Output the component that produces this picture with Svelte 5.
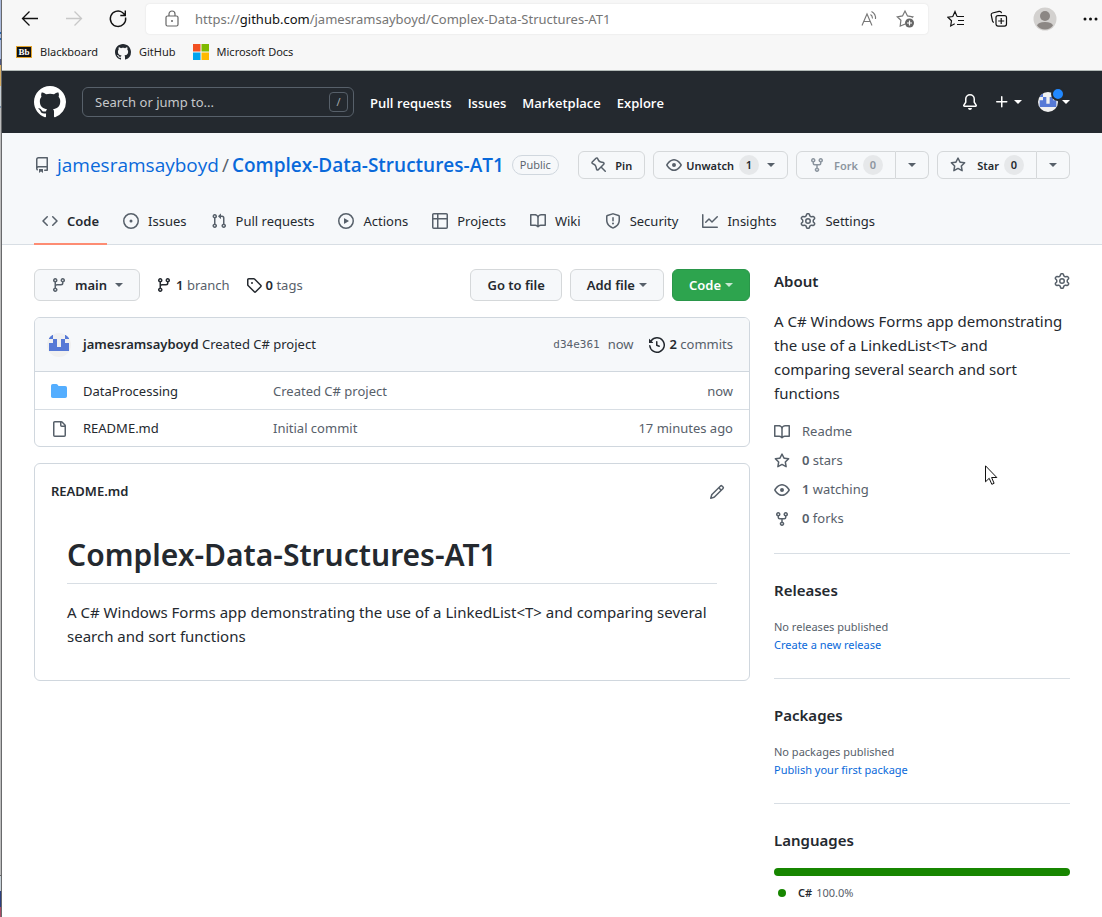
<script>
  const icons = {
    mark: 'M8 0C3.58 0 0 3.58 0 8c0 3.54 2.29 6.53 5.47 7.59.4.07.55-.17.55-.38 0-.19-.01-.82-.01-1.49-2.01.37-2.53-.49-2.69-.94-.09-.23-.48-.94-.82-1.13-.28-.15-.68-.52-.01-.53.63-.01 1.08.58 1.23.82.72 1.21 1.87.87 2.33.66.07-.52.28-.87.51-1.07-1.78-.2-3.64-.89-3.64-3.95 0-.87.31-1.59.82-2.15-.08-.2-.36-1.02.08-2.12 0 0 .67-.21 2.2.82.64-.18 1.32-.27 2-.27.68 0 1.36.09 2 .27 1.53-1.04 2.2-.82 2.2-.82.44 1.1.16 1.92.08 2.12.51.56.82 1.27.82 2.15 0 3.07-1.87 3.75-3.65 3.95.29.25.54.73.54 1.48 0 1.07-.01 1.93-.01 2.2 0 .21.15.46.55.38A8.013 8.013 0 0016 8c0-4.42-3.58-8-8-8z',
    repo: 'M2 2.5A2.5 2.5 0 014.5 0h8.75a.75.75 0 01.75.75v12.5a.75.75 0 01-.75.75h-2.5a.75.75 0 110-1.5h1.75v-2h-8a1 1 0 00-.714 1.7.75.75 0 01-1.072 1.05A2.495 2.495 0 012 11.5v-9zm10.5-1V9h-8c-.356 0-.694.074-1 .208V2.5a1 1 0 011-1h8zM5 12.25v3.25a.25.25 0 00.4.2l1.45-1.087a.25.25 0 01.3 0L8.6 15.7a.25.25 0 00.4-.2v-3.25a.25.25 0 00-.25-.25h-3.5a.25.25 0 00-.25.25z',
    pin: 'M4.456.734a1.75 1.75 0 012.826.504l.613 1.327a3.081 3.081 0 002.084 1.707l2.454.584c1.332.317 1.8 1.972.832 2.94L11.06 10l3.72 3.72a.75.75 0 11-1.061 1.06L10 11.06l-2.204 2.205c-.968.968-2.623.5-2.94-.832l-.584-2.454a3.081 3.081 0 00-1.707-2.084l-1.327-.613a1.75 1.75 0 01-.504-2.826L4.456.734zM5.92 1.866a.25.25 0 00-.404-.072L1.794 5.516a.25.25 0 00.072.404l1.328.613A4.582 4.582 0 015.73 9.63l.584 2.454a.25.25 0 00.42.12l5.47-5.47a.25.25 0 00-.12-.42L9.63 5.73a4.581 4.581 0 01-3.098-2.537L5.92 1.866z',
    eye: 'M1.679 7.932c.412-.621 1.242-1.75 2.366-2.717C5.175 4.242 6.527 3.5 8 3.5c1.473 0 2.824.742 3.955 1.715 1.124.967 1.954 2.096 2.366 2.717a.119.119 0 010 .136c-.412.621-1.242 1.75-2.366 2.717C10.825 11.758 9.473 12.5 8 12.5c-1.473 0-2.824-.742-3.955-1.715C2.92 9.818 2.09 8.69 1.679 8.068a.119.119 0 010-.136zM8 2c-1.981 0-3.67.992-4.933 2.078C1.797 5.169.88 6.423.43 7.1a1.619 1.619 0 000 1.798c.45.678 1.367 1.932 2.637 3.024C4.329 13.008 6.019 14 8 14c1.981 0 3.67-.992 4.933-2.078 1.27-1.091 2.187-2.345 2.637-3.023a1.619 1.619 0 000-1.798c-.45-.678-1.367-1.932-2.637-3.023C11.671 2.992 9.981 2 8 2zm0 8a2 2 0 100-4 2 2 0 000 4z',
    fork: 'M5 3.25a.75.75 0 11-1.5 0 .75.75 0 011.5 0zm0 2.122a2.25 2.25 0 10-1.5 0v.878A2.25 2.25 0 005.75 8.5h1.5v2.128a2.251 2.251 0 101.5 0V8.5h1.5a2.25 2.25 0 002.25-2.25v-.878a2.25 2.25 0 10-1.5 0v.878a.75.75 0 01-.75.75h-4.5A.75.75 0 015 6.25v-.878zm3.75 7.378a.75.75 0 11-1.5 0 .75.75 0 011.5 0zm3-8.75a.75.75 0 100-1.5.75.75 0 000 1.5z',
    star: 'M8 .25a.75.75 0 01.673.418l1.882 3.815 4.21.612a.75.75 0 01.416 1.279l-3.046 2.97.719 4.192a.75.75 0 01-1.088.791L8 12.347l-3.766 1.98a.75.75 0 01-1.088-.79l.72-4.194L.818 6.374a.75.75 0 01.416-1.28l4.21-.611L7.327.668A.75.75 0 018 .25zm0 2.445L6.615 5.5a.75.75 0 01-.564.41l-3.097.45 2.24 2.184a.75.75 0 01.216.664l-.528 3.084 2.769-1.456a.75.75 0 01.698 0l2.77 1.456-.53-3.084a.75.75 0 01.216-.664l2.24-2.183-3.096-.45a.75.75 0 01-.564-.41L8 2.694v.001z',
    code: 'M4.72 3.22a.75.75 0 011.06 1.06L2.06 8l3.72 3.72a.75.75 0 11-1.06 1.06L.47 8.53a.75.75 0 010-1.06l4.25-4.25zm6.56 0a.75.75 0 10-1.06 1.06L13.94 8l-3.72 3.72a.75.75 0 101.06 1.06l4.25-4.25a.75.75 0 000-1.06l-4.25-4.25z',
    issue: 'M8 9.5a1.5 1.5 0 100-3 1.5 1.5 0 000 3zM8 0a8 8 0 100 16A8 8 0 008 0zM1.5 8a6.5 6.5 0 1113 0 6.5 6.5 0 01-13 0z',
    pull: 'M7.177 3.073L9.573.677A.25.25 0 0110 .854v4.792a.25.25 0 01-.427.177L7.177 3.427a.25.25 0 010-.354zM3.75 2.5a.75.75 0 100 1.5.75.75 0 000-1.5zm-2.25.75a2.25 2.25 0 113 2.122v5.256a2.251 2.251 0 11-1.5 0V5.372A2.25 2.25 0 011.5 3.25zM11 2.5h-1V4h1a1 1 0 011 1v5.628a2.251 2.251 0 101.5 0V5A2.5 2.5 0 0011 2.5zm1 10.25a.75.75 0 111.5 0 .75.75 0 01-1.5 0zM3.75 12a.75.75 0 100 1.5.75.75 0 000-1.5z',
    play: 'M1.5 8a6.5 6.5 0 1113 0 6.5 6.5 0 01-13 0zM8 0a8 8 0 100 16A8 8 0 008 0zM6.379 5.227A.25.25 0 006 5.442v5.117a.25.25 0 00.379.214l4.264-2.559a.25.25 0 000-.428L6.379 5.227z',
    table: 'M0 1.75C0 .784.784 0 1.75 0h12.5C15.216 0 16 .784 16 1.75v12.5A1.75 1.75 0 0114.25 16H1.75A1.75 1.75 0 010 14.25V1.75zM1.5 6.5v7.75c0 .138.112.25.25.25H5v-8H1.5zM5 5H1.5V1.75a.25.25 0 01.25-.25H5V5zm1.5 1.5v8h7.75a.25.25 0 00.25-.25V6.5h-8zm8-1.5h-8V1.5h7.75a.25.25 0 01.25.25V5z',
    book: 'M0 1.75A.75.75 0 01.75 1h4.253c1.227 0 2.317.59 3 1.501A3.744 3.744 0 0111.006 1h4.245a.75.75 0 01.75.75v10.5a.75.75 0 01-.75.75h-4.507a2.25 2.25 0 00-1.591.659l-.622.621a.75.75 0 01-1.06 0l-.622-.621A2.25 2.25 0 005.258 13H.75a.75.75 0 01-.75-.75V1.75zm8.755 3a2.25 2.25 0 012.25-2.25H14.5v9h-3.757c-.71 0-1.4.201-1.992.572l.004-7.322zm-1.504 7.324l.004-5.073-.002-2.253A2.25 2.25 0 005.003 2.5H1.5v9h3.757a3.75 3.75 0 011.994.574z',
    shield: 'M7.467.133a1.75 1.75 0 011.066 0l5.25 1.68A1.75 1.75 0 0115 3.48V7c0 1.566-.32 3.182-1.303 4.682-.983 1.498-2.585 2.813-5.032 3.855a1.7 1.7 0 01-1.33 0c-2.447-1.042-4.049-2.357-5.032-3.855C1.32 10.182 1 8.566 1 7V3.48a1.75 1.75 0 011.217-1.667l5.25-1.68zm.61 1.429a.25.25 0 00-.153 0l-5.25 1.68a.25.25 0 00-.174.238V7c0 1.358.275 2.666 1.057 3.86.784 1.194 2.121 2.34 4.366 3.297a.2.2 0 00.154 0c2.245-.956 3.582-2.104 4.366-3.298C13.225 9.666 13.5 8.36 13.5 7V3.48a.25.25 0 00-.174-.237l-5.25-1.68zM9 10.5a1 1 0 11-2 0 1 1 0 012 0zm-.25-5.75a.75.75 0 10-1.5 0v3a.75.75 0 001.5 0v-3z',
    graph: 'M1.5 1.75a.75.75 0 00-1.5 0v12.5c0 .414.336.75.75.75h14.5a.75.75 0 000-1.5H1.5V1.75zm14.28 2.53a.75.75 0 00-1.06-1.06L10 7.94 7.53 5.47a.75.75 0 00-1.06 0L3.22 8.72a.75.75 0 001.06 1.06L7 7.06l2.47 2.47a.75.75 0 001.06 0l5.25-5.25z',
    gear: 'M7.429 1.525a6.593 6.593 0 011.142 0c.036.003.108.036.137.146l.289 1.105c.147.56.55.967.997 1.189.174.086.341.183.501.29.417.278.97.423 1.53.27l1.102-.303c.11-.03.175.016.195.046.219.31.41.641.573.989.014.031.022.11-.059.19l-.815.806c-.411.406-.562.957-.53 1.456a4.588 4.588 0 010 .582c-.032.499.119 1.05.53 1.456l.815.806c.08.08.073.159.059.19a6.494 6.494 0 01-.573.99c-.02.029-.086.074-.195.045l-1.103-.303c-.559-.153-1.112-.008-1.529.27-.16.107-.327.204-.5.29-.449.222-.851.628-.998 1.189l-.289 1.105c-.029.11-.101.143-.137.146a6.613 6.613 0 01-1.142 0c-.036-.003-.108-.037-.137-.146l-.289-1.105c-.147-.56-.55-.967-.997-1.189a4.502 4.502 0 01-.501-.29c-.417-.278-.97-.423-1.53-.27l-1.102.303c-.11.03-.175-.016-.195-.046a6.492 6.492 0 01-.573-.989c-.014-.031-.022-.11.059-.19l.815-.806c.411-.406.562-.957.53-1.456a4.587 4.587 0 010-.582c.032-.499-.119-1.05-.53-1.456l-.815-.806c-.08-.08-.073-.159-.059-.19a6.44 6.44 0 01.573-.99c.02-.029.086-.075.195-.045l1.103.303c.559.153 1.112.008 1.529-.27.16-.107.327-.204.5-.29.449-.222.851-.628.998-1.189l.289-1.105c.029-.11.101-.143.137-.146zM8 0c-.236 0-.47.01-.701.03-.743.065-1.29.615-1.458 1.261l-.29 1.106c-.017.066-.078.158-.211.224a5.994 5.994 0 00-.668.386c-.123.082-.233.09-.3.071L3.27 2.776c-.644-.177-1.392.02-1.82.63a7.977 7.977 0 00-.704 1.217c-.315.675-.111 1.422.363 1.891l.815.806c.05.048.098.147.088.294a6.084 6.084 0 000 .772c.01.147-.038.246-.088.294l-.815.806c-.474.469-.678 1.216-.363 1.891.2.428.436.835.704 1.218.428.609 1.176.806 1.82.63l1.103-.303c.066-.019.176-.011.299.071.213.143.436.272.668.386.133.066.194.158.212.224l.289 1.106c.169.646.715 1.196 1.458 1.26a8.094 8.094 0 001.402 0c.743-.064 1.29-.614 1.458-1.26l.29-1.106c.017-.066.078-.158.211-.224a5.98 5.98 0 00.668-.386c.123-.082.233-.09.3-.071l1.102.302c.644.177 1.392-.02 1.82-.63.268-.382.505-.789.704-1.217.315-.675.111-1.422-.364-1.891l-.814-.806c-.05-.048-.098-.147-.088-.294a6.1 6.1 0 000-.772c-.01-.147.039-.246.088-.294l.814-.806c.475-.469.679-1.216.364-1.891a7.992 7.992 0 00-.704-1.218c-.428-.609-1.176-.806-1.82-.63l-1.103.303c-.066.019-.176.011-.299-.071a5.991 5.991 0 00-.668-.386c-.133-.066-.194-.158-.212-.224L10.16 1.29C9.99.645 9.444.095 8.701.031A8.094 8.094 0 008 0zm1.5 8a1.5 1.5 0 11-3 0 1.5 1.5 0 013 0zM11 8a3 3 0 11-6 0 3 3 0 016 0z',
    branch: 'M11.75 2.5a.75.75 0 100 1.5.75.75 0 000-1.5zm-2.25.75a2.25 2.25 0 113 2.122V6A2.5 2.5 0 0110 8.5H6a1 1 0 00-1 1v1.128a2.251 2.251 0 11-1.5 0V5.372a2.25 2.25 0 111.5 0v1.836A2.492 2.492 0 016 7h4a1 1 0 001-1v-.628A2.25 2.25 0 019.5 3.25zM4.25 12a.75.75 0 100 1.5.75.75 0 000-1.5zM3.5 3.25a.75.75 0 111.5 0 .75.75 0 01-1.5 0z',
    tag: 'M2.5 7.775V2.75a.25.25 0 01.25-.25h5.025a.25.25 0 01.177.073l6.25 6.25a.25.25 0 010 .354l-5.025 5.025a.25.25 0 01-.354 0l-6.25-6.25a.25.25 0 01-.073-.177zm-1.5 0V2.75C1 1.784 1.784 1 2.75 1h5.025c.464 0 .91.184 1.238.513l6.25 6.25a1.75 1.75 0 010 2.474l-5.026 5.026a1.75 1.75 0 01-2.474 0l-6.25-6.25A1.75 1.75 0 011 7.775zM6 5a1 1 0 100 2 1 1 0 000-2z',
    history: 'M1.643 3.143L.427 1.927A.25.25 0 000 2.104V5.75c0 .138.112.25.25.25h3.646a.25.25 0 00.177-.427L2.715 4.215a6.5 6.5 0 11-1.18 4.458.75.75 0 10-1.493.154 8.001 8.001 0 101.6-5.684zM7.75 4a.75.75 0 01.75.75v2.992l2.028.812a.75.75 0 01-.557 1.392l-2.5-1A.75.75 0 017 8.25v-3.5A.75.75 0 017.75 4z',
    folder: 'M1.75 1A1.75 1.75 0 000 2.75v10.5C0 14.216.784 15 1.75 15h12.5A1.75 1.75 0 0016 13.25v-8.5A1.75 1.75 0 0014.25 3h-6.5a.25.25 0 01-.2-.1l-.9-1.2c-.33-.44-.85-.7-1.4-.7h-3.5z',
    file: 'M2 1.75C2 .784 2.784 0 3.75 0h6.586c.464 0 .909.184 1.237.513l2.914 2.914c.329.328.513.773.513 1.237v9.586A1.75 1.75 0 0113.25 16h-9.5A1.75 1.75 0 012 14.25V1.75zm1.75-.25a.25.25 0 00-.25.25v12.5c0 .138.112.25.25.25h9.5a.25.25 0 00.25-.25V6h-2.75A1.75 1.75 0 019 4.25V1.5H3.75zm6.75.062V4.25c0 .138.112.25.25.25h2.688a.252.252 0 00-.011-.013l-2.914-2.914a.272.272 0 00-.013-.011z',
    pencil: 'M11.013 1.427a1.75 1.75 0 012.474 0l1.086 1.086a1.75 1.75 0 010 2.474l-8.61 8.61c-.21.21-.47.364-.756.445l-3.251.93a.75.75 0 01-.927-.928l.929-3.25a1.75 1.75 0 01.445-.758l8.61-8.61zm1.414 1.06a.25.25 0 00-.354 0L10.811 3.75l1.439 1.44 1.263-1.263a.25.25 0 000-.354l-1.086-1.086zM11.189 6.25L9.75 4.81l-6.286 6.287a.25.25 0 00-.064.108l-.558 1.953 1.953-.558a.249.249 0 00.108-.064l6.286-6.286z',
    bell: 'M8 16a2 2 0 001.985-1.75c.017-.137-.097-.25-.235-.25h-3.5c-.138 0-.252.113-.235.25A2 2 0 008 16zM8 1.5A3.5 3.5 0 004.5 5v2.947c0 .346-.102.683-.294.97l-1.703 2.556a.018.018 0 00-.003.01l.001.006c0 .002.002.004.004.006a.017.017 0 00.006.004l.007.001h10.964l.007-.001a.016.016 0 00.006-.004.016.016 0 00.004-.006l.001-.007a.017.017 0 00-.003-.01l-1.703-2.554a1.75 1.75 0 01-.294-.97V5A3.5 3.5 0 008 1.5zM3 5a5 5 0 0110 0v2.947c0 .05.015.098.042.139l1.703 2.555A1.518 1.518 0 0113.482 13H2.518a1.518 1.518 0 01-1.263-2.36l1.703-2.554A.25.25 0 003 7.947V5z',
    plus: 'M7.75 2a.75.75 0 01.75.75V7h4.25a.75.75 0 110 1.5H8.5v4.25a.75.75 0 11-1.5 0V8.5H2.75a.75.75 0 010-1.5H7V2.75A.75.75 0 017.75 2z'
  };

  const tabs = [
    ['code', 'Code'], ['issue', 'Issues'], ['pull', 'Pull requests'],
    ['play', 'Actions'], ['table', 'Projects'], ['book', 'Wiki'],
    ['shield', 'Security'], ['graph', 'Insights'], ['gear', 'Settings']
  ];

  const files = [
    { icon: 'folder', name: 'DataProcessing', message: 'Created C# project', age: 'now' },
    { icon: 'file', name: 'README.md', message: 'Initial commit', age: '17 minutes ago' }
  ];

  const facts = [
    { icon: 'book', count: '', label: 'Readme' },
    { icon: 'star', count: '0', label: 'stars' },
    { icon: 'eye', count: '1', label: 'watching' },
    { icon: 'fork', count: '0', label: 'forks' }
  ];

  const description = 'A C# Windows Forms app demonstrating the use of a LinkedList<T> and comparing several search and sort functions';
</script>

{#snippet icon(name, size = 16)}
  <svg class="icon icon-{name}" width={size} height={size} viewBox="0 0 16 16" fill="currentColor" aria-hidden="true">
    <path fill-rule="evenodd" d={icons[name]} />
  </svg>
{/snippet}

{#snippet identicon(size)}
  <svg class="identicon" width={size} height={size} viewBox="0 0 24 24" aria-hidden="true">
    <rect width="24" height="24" fill="#f0f0f0" />
    <path fill="#5679d6" d="M2 2h4v4H2zM18 2h4v4h-4zM6 6h4v8h4V6h4v4h4v8H2v-8h4z" />
  </svg>
{/snippet}

<div class="window">
  <div class="chrome">
    <div class="toolbar">
      <button class="tool" aria-label="Back">
        <svg width="20" height="20" viewBox="0 0 20 20" fill="none" stroke="#111" stroke-width="1.3"><path d="M18 9.5H3M9.5 2.5l-7 7 7 7" /></svg>
      </button>
      <button class="tool" aria-label="Forward" disabled>
        <svg width="20" height="20" viewBox="0 0 20 20" fill="none" stroke="#c8c8c8" stroke-width="1.3"><path d="M2 9.5h15M10.500 2.500l7 7-7 7" /></svg>
      </button>
      <button class="tool" aria-label="Refresh">
        <svg width="20" height="20" viewBox="0 0 20 20" fill="none" stroke="#111" stroke-width="1.4"><path d="M17.600 8.500A7.700 7.700 0 1 1 14.500 3.500L17 6M17.300 1.500v5h-5" /></svg>
      </button>
      <div class="address">
        <svg width="14" height="18" viewBox="0 0 14 18" fill="none" stroke="#666" stroke-width="1.2"><rect x="1" y="6" width="12" height="10" rx="1.500" /><path d="M4 6V4a3 3 0 0 1 6 0v2" /><circle cx="7" cy="11" r="1" fill="#666" stroke="none" /></svg>
        <div class="url"><span>https://</span>github.com<span>/jamesramsayboyd/Complex-Data-Structures-AT1</span></div>
        <button class="tool" aria-label="Read aloud">
          <svg width="18" height="18" viewBox="0 0 18 18" fill="none" stroke="#777" stroke-width="1.1"><path d="M2 15.500L7 4l5 11.500M4 11.500h6.200M10.500 4.500q2 1.300 2 4M11.500 1.500q4.500 2.500 4 7.500" /></svg>
        </button>
        <button class="tool" aria-label="Add to favorites">
          <svg width="20" height="20" viewBox="0 0 20 20"><path d="M9.300 15L4.200 17l.7-5.800L1.300 7.800l5.200-.9L9 2l2.500 4.900 5.300.9-1 1" fill="none" stroke="#777" stroke-width="1.200" /><circle cx="13.500" cy="14" r="4.500" fill="#666" /><path d="M13.500 11.500v5M11 14h5" stroke="#fff" stroke-width="1.200" /></svg>
        </button>
      </div>
      <div class="tools">
        <button class="tool" aria-label="Favorites">
          <svg width="18" height="18" viewBox="0 0 18 18" fill="none" stroke="#111" stroke-width="1.200"><path d="M10 6.500L8 1.500 5.800 6.500.9 7.200l3.600 3.600-.8 5.200 4-2.200M10 6.500h7M11 10.500h6M10 14.500h7" /></svg>
        </button>
        <button class="tool" aria-label="Collections">
          <svg width="18" height="18" viewBox="0 0 18 18" fill="none" stroke="#111" stroke-width="1.200"><rect x="6" y="5.600" width="10.500" height="10.500" rx="2" /><path d="M11.200 8v6M8.200 11h6M3.800 12.500Q2.800 12 2.500 11L1.200 5Q1 3.400 2.500 3L9 1.400Q11 1 11.600 3.200" /></svg>
        </button>
        <button class="tool" aria-label="Profile">
          <svg width="24" height="24" viewBox="0 0 24 24"><circle cx="12" cy="12" r="11.500" fill="#d3d1cf" /><circle cx="12" cy="9" r="5" fill="#8c8784" /><path d="M4 18.500q1-3.500 8-3.500t8 3.500q-3 4-8 4t-8-4z" fill="#8c8784" /></svg>
        </button>
        <button class="tool" aria-label="More">
          <svg width="16" height="16" viewBox="0 0 16 16" fill="#111"><circle cx="3" cy="8" r="1.500" /><circle cx="8.500" cy="8" r="1.500" /><circle cx="14" cy="8" r="1.500" /></svg>
        </button>
      </div>
    </div>
    <nav class="bookmarks" aria-label="Bookmarks">
      <a href="#blackboard"><span class="bb">Bb</span>Blackboard</a>
      <a href="#github">{@render icon('mark')}GitHub</a>
      <a href="#docs">
        <svg width="16" height="16" viewBox="0 0 16 16" aria-hidden="true"><path fill="#f25022" d="M0 0h7.500v7.500H0z" /><path fill="#7fba00" d="M8.500 0H16v7.500H8.500z" /><path fill="#00a4ef" d="M0 8.500h7.500V16H0z" /><path fill="#ffb900" d="M8.500 8.500H16V16H8.500z" /></svg>
        Microsoft Docs</a>
    </nav>
  </div>

  <header class="site">
    <a class="logo" href="#home" aria-label="Homepage">{@render icon('mark', 32)}</a>
    <label class="search">
      <input type="text" placeholder="Search or jump to..." aria-label="Search or jump to" />
      <kbd>/</kbd>
    </label>
    <nav class="global" aria-label="Global">
      <a href="#pulls">Pull requests</a>
      <a href="#issues">Issues</a>
      <a href="#marketplace">Marketplace</a>
      <a href="#explore">Explore</a>
    </nav>
    <div class="user">
      <button aria-label="Notifications">{@render icon('bell')}</button>
      <button aria-label="Create new">{@render icon('plus')}<i class="caret"></i></button>
      <button class="account" aria-label="Account">{@render identicon(20)}<i class="caret"></i><b class="dot"></b></button>
    </div>
  </header>

  <section class="repohead">
    <div class="heading">
      <div class="title">
        {@render icon('repo')}
        <a href="#owner">jamesramsayboyd</a><span class="slash">/</span><a class="strong" href="#repo">Complex-Data-Structures-AT1</a>
        <span class="label">Public</span>
      </div>
      <div class="actions">
        <button class="small pinned">{@render icon('pin')}Pin</button>
        <button class="small watch">{@render icon('eye')}Unwatch<span class="counter">1</span><i class="caret"></i></button>
        <div class="pair">
          <button class="small off">{@render icon('fork')}Fork<span class="counter">0</span></button>
          <button class="small more" aria-label="Fork options"><i class="caret"></i></button>
        </div>
        <div class="pair">
          <button class="small">{@render icon('star')}Star<span class="counter">0</span></button>
          <button class="small more" aria-label="Lists"><i class="caret"></i></button>
        </div>
      </div>
    </div>
    <nav class="tabs" aria-label="Repository">
      {#each tabs as [name, text], i}
        <a href="#{name}" class:current={i === 0}>{@render icon(name)}{text}</a>
      {/each}
    </nav>
  </section>

  <div class="layout">
    <main>
      <div class="filebar">
        <button class="btn">{@render icon('branch')}main<i class="caret"></i></button>
        <a class="stat" href="#branches">{@render icon('branch')}<span><b>1</b> branch</span></a>
        <a class="stat" href="#tags">{@render icon('tag')}<span><b>0</b> tags</span></a>
        <div class="right">
          <button class="btn">Go to file</button>
          <button class="btn tight">Add file<i class="caret"></i></button>
          <button class="btn tight green">Code<i class="caret"></i></button>
        </div>
      </div>

      <div class="box">
        <div class="commit">
          {@render identicon(24)}
          <span class="message"><b>jamesramsayboyd</b> Created C# project</span>
          <a class="hash" href="#commit">d34e361</a>
          <span class="muted">now</span>
          <a class="stat" href="#commits">{@render icon('history')}<span><b>2</b> commits</span></a>
        </div>
        <table>
          <tbody>
            {#each files as f}
              <tr>
                <td class="type">{@render icon(f.icon)}</td>
                <td class="name"><a href="#{f.name}">{f.name}</a></td>
                <td>{f.message}</td>
                <td class="age">{f.age}</td>
              </tr>
            {/each}
          </tbody>
        </table>
      </div>

      <article class="box readme">
        <div class="readmebar">
          <h2>README.md</h2>
          <button aria-label="Edit README">{@render icon('pencil')}</button>
        </div>
        <div class="prose">
          <h1>Complex-Data-Structures-AT1</h1>
          <p>{description}</p>
        </div>
      </article>
    </main>

    <aside>
      <section>
        <div class="abouthead">
          <h2>About</h2>
          <button aria-label="Edit details">{@render icon('gear')}</button>
        </div>
        <p class="about">{description}</p>
        <ul>
          {#each facts as fact}
            <li><a href="#{fact.label}">{@render icon(fact.icon)}<span>{#if fact.count}<b>{fact.count}</b>{' '}{/if}{fact.label}</span></a></li>
          {/each}
        </ul>
      </section>
      <section>
        <h2>Releases</h2>
        <p class="note">No releases published</p>
        <a class="note link" href="#release">Create a new release</a>
      </section>
      <section>
        <h2>Packages</h2>
        <p class="note">No packages published</p>
        <a class="note link" href="#package">Publish your first package</a>
      </section>
      <section>
        <h2>Languages</h2>
        <div class="bar"></div>
        <p class="language"><i></i><b>C#</b> 100.0%</p>
      </section>
    </aside>
  </div>

  <svg class="pointer" width="13" height="21" viewBox="0 0 13 21" aria-hidden="true">
    <path d="M.5.8v16l3.700-3.500 2.600 6 2.300-1-2.500-5.800h5.200z" fill="#fff" stroke="#111" />
  </svg>
</div>

<style>
  :global(body) { margin: 0; background: #fff; }
  :global(*) { box-sizing: border-box; }

  .window {
    position: relative;
    min-height: 100vh;
    padding-left: 2px;
    font: 13px/21px "Noto Sans", "Open Sans", sans-serif;
    color: #24292f;
    background:
      linear-gradient(#68696b, #68696b) 1px 0 / 1px 100% no-repeat,
      linear-gradient(#a9b9dc 32px, #2a66ad 32px 34px, #a9b9dc 34px 38px, #2a66ad 38px 40px, #a9b9dc 40px 59px, #4b5580 59px 65px, #d9b066 65px 86px, #c5cdd3 86px 106px, #7e94ac 106px 108px, #bcbcbc 108px 875px, #666 875px 876px, #c5d0d8 876px 891px, #2b3f80 891px 907px, #a84a65 907px) 0 0 / 1px 100% no-repeat,
      #fff;
  }
  button { font: inherit; color: inherit; background: none; border: 0; padding: 0; cursor: pointer; white-space: nowrap; }
  a { color: inherit; text-decoration: none; }
  h1, h2, p, ul { margin: 0; padding: 0; }
  b, h1, h2 { font-weight: 600; }
  svg { display: block; flex: none; }
  .caret { width: 0; height: 0; border: 4px solid transparent; border-top-color: currentColor; border-bottom: 0; }

  .chrome { height: 71px; background: #f7f7f7; border-bottom: 1px solid #b3bab8; }
  .toolbar { display: flex; align-items: center; height: 38px; padding-left: 18px; }
  .toolbar > .tool { margin-right: 24px; }
  .tool { display: flex; }
  .address {
    display: flex; align-items: center; flex: 1; min-width: 0; height: 30px;
    padding: 0 12px 0 19px; background: #fff; border-radius: 4px; box-shadow: 0 0 2px #ddd;
    margin-left: -6px;
  }
  .url { flex: 1; min-width: 0; margin-left: 16px; overflow: hidden; white-space: nowrap; color: #111; }
  .url span { color: #757575; }
  .address .tool + .tool { margin-left: 18px; }
  .tools { display: flex; align-items: center; gap: 25px; margin-left: 19px; padding-right: 4px; }
  .bookmarks { display: flex; gap: 17px; padding: 3px 14px; font-size: 11px; color: #222; }
  .bookmarks a { display: flex; align-items: center; gap: 8px; }
  .bb {
    width: 16px; height: 12px; border: 1px solid #e3a42b; background: #111; color: #fff;
    font: bold 9px/10px "Liberation Serif", serif; text-align: center;
  }
  .bookmarks .icon { color: #24292f; }

  .site { display: flex; align-items: center; height: 62px; padding: 0 32px; background: #24292f; color: #fff; }
  .search {
    display: flex; align-items: center; width: 272px; height: 30px; margin: 0 16px;
    padding: 0 5px 0 12px; border: 1px solid #57606a; border-radius: 6px;
  }
  input { flex: 1; min-width: 0; font: inherit; color: #fff; background: none; border: 0; padding: 0; outline: 0; }
  input::placeholder { color: #c6c8ca; opacity: 1; }
  kbd {
    width: 19px; height: 20px; border: 1px solid #57606a; border-radius: 4px;
    font: 11px/18px "Noto Sans", sans-serif; text-align: center; color: #a5a9ad;
  }
  .global { display: flex; gap: 16px; padding-top: 2px; font-family: "Open Sans", sans-serif; font-weight: 600; }
  .user { display: flex; align-items: center; gap: 16px; margin-left: auto; }
  .user button { display: flex; align-items: center; gap: 4px; }
  .user .account { position: relative; }
  .identicon { border-radius: 50%; }
  .dot {
    position: absolute; left: 13px; top: -5px; width: 14px; height: 14px;
    border: 2px solid #24292f; border-radius: 50%; background: #2188ff;
  }

  .repohead { padding: 16px 32px 0; background: #f6f8fa; border-bottom: 1px solid #d8dee4; }
  .heading { display: flex; align-items: center; justify-content: space-between; height: 32px; margin-bottom: 16px; }
  .title { display: flex; align-items: center; font-family: "Open Sans", sans-serif; font-size: 19px; white-space: nowrap; color: #0969da; }
  .title .icon { margin-right: 7px; color: #57606a; }
  .slash { margin: 0 3px; color: #57606a; }
  .strong { font-weight: 600; }
  .label {
    margin-left: 8px; padding: 0 7px; border: 1px solid #d0d7de; border-radius: 20px;
    font-size: 11px; line-height: 18px; font-weight: 500; color: #57606a;
  }
  .actions, .pair { display: flex; }
  .actions { gap: 8px; }
  .small {
    display: flex; align-items: center; height: 28px; padding: 0 12px; gap: 8px;
    border: 1px solid #d5d8da; border-radius: 6px; background: #f6f8fa; font-size: 11px; font-weight: 600;
  }
  .small .icon, .small .caret { color: #57606a; }
  .watch .icon { margin-right: -4px; }
  .counter { min-width: 20px; margin-left: -3px; border-radius: 20px; background: #e6e8ea; line-height: 20px; text-align: center; }
  .off, .off .icon { color: #8c959f; }
  .pair .small:first-child { min-width: 100px; border-radius: 6px 0 0 6px; }
  .pair .icon { margin-right: auto; }
  .pair .more { border-left: 0; border-radius: 0 6px 6px 0; }

  .tabs { display: flex; gap: 8px; height: 47px; white-space: nowrap; }
  .tabs a { display: flex; align-items: center; gap: 9px; height: 48px; padding: 2px 8px 0; border-bottom: 2px solid transparent; }
  .tabs .icon { color: #57606a; }
  .tabs .current { font-weight: 600; border-color: #fd8c73; }

  .layout { display: grid; grid-template-columns: minmax(0, 1fr) 296px; gap: 24px; padding: 24px 32px; }
  .filebar { display: flex; align-items: center; gap: 16px; margin-bottom: 16px; }
  .btn {
    display: flex; align-items: center; gap: 8px; height: 32px; padding: 0 16px;
    border: 1px solid #d5d8da; border-radius: 6px; background: #f6f8fa; font-weight: 600;
  }
  .btn .icon, .btn .caret { color: #57606a; }
  .btn.tight { gap: 4px; }
  .btn.green { background: #2da44e; border-color: #2a964a; color: #fff; }
  .btn.green .caret { color: #c8e8d1; }
  .stat { display: flex; align-items: center; gap: 4px; color: #57606a; white-space: nowrap; }
  .stat .icon, .stat b { color: #24292f; }
  .right { display: flex; gap: 8px; margin-left: auto; }

  .box { border: 1px solid #d0d7de; border-radius: 6px; overflow: hidden; }
  .commit { display: flex; align-items: center; height: 54px; padding: 0 16px 0 12px; background: #f6f8fa; border-bottom: 1px solid #d0d7de; }
  .message { flex: 1; margin-left: 12px; }
  .hash { margin-right: 8px; font: 11px "DejaVu Sans Mono", monospace; color: #57606a; }
  .muted { margin-right: 16px; color: #57606a; }
  table { width: 100%; border-collapse: collapse; table-layout: fixed; }
  td { height: 37px; padding: 2px 0 0; color: #57606a; white-space: nowrap; }
  tr + tr td { border-top: 1px solid #d8dee4; }
  .type { width: 48px; padding-left: 16px; }
  .name { width: 190px; color: #24292f; }
  .age { padding-right: 16px; text-align: right; }
  .icon-folder { color: #54aeff; }

  .readme { margin-top: 16px; padding-bottom: 32px; }
  .readmebar { display: flex; align-items: center; justify-content: space-between; height: 55px; padding: 0 24px 0 16px; color: #57606a; }
  .readmebar h2 { font-size: 13px; color: #24292f; }
  .prose { padding: 16px 32px 0; font-size: 15px; line-height: 24px; }
  h1 { padding-bottom: 8px; margin-bottom: 16px; border-bottom: 1px solid #d8dee4; font-size: 30px; line-height: 40px; }

  aside section + section { margin-top: 24px; padding-top: 24px; border-top: 1px solid #d8dee4; }
  aside h2 { margin-bottom: 16px; font-size: 15px; line-height: 24px; }
  .abouthead { display: flex; justify-content: space-between; color: #57606a; }
  .abouthead h2 { color: #24292f; }
  .abouthead button { height: 24px; }
  .about { margin-bottom: 16px; padding-right: 5px; font-size: 15px; line-height: 24px; }
  ul { display: flex; flex-direction: column; gap: 8px; list-style: none; color: #57606a; }
  li a { display: flex; align-items: center; gap: 12px; }
  .note { display: block; font-size: 11px; line-height: 18px; color: #57606a; }
  .link { color: #0969da; }
  .bar { height: 8px; border-radius: 6px; background: #178600; }
  .language { display: flex; align-items: center; gap: 4px; margin-top: 8px; font-size: 11px; line-height: 18px; color: #57606a; }
  .language i { width: 8px; height: 8px; margin: 0 8px 0 4px; border-radius: 50%; background: #178600; }
  .language b { color: #24292f; }
  .pointer { position: absolute; left: 985px; top: 465px; }
</style>
